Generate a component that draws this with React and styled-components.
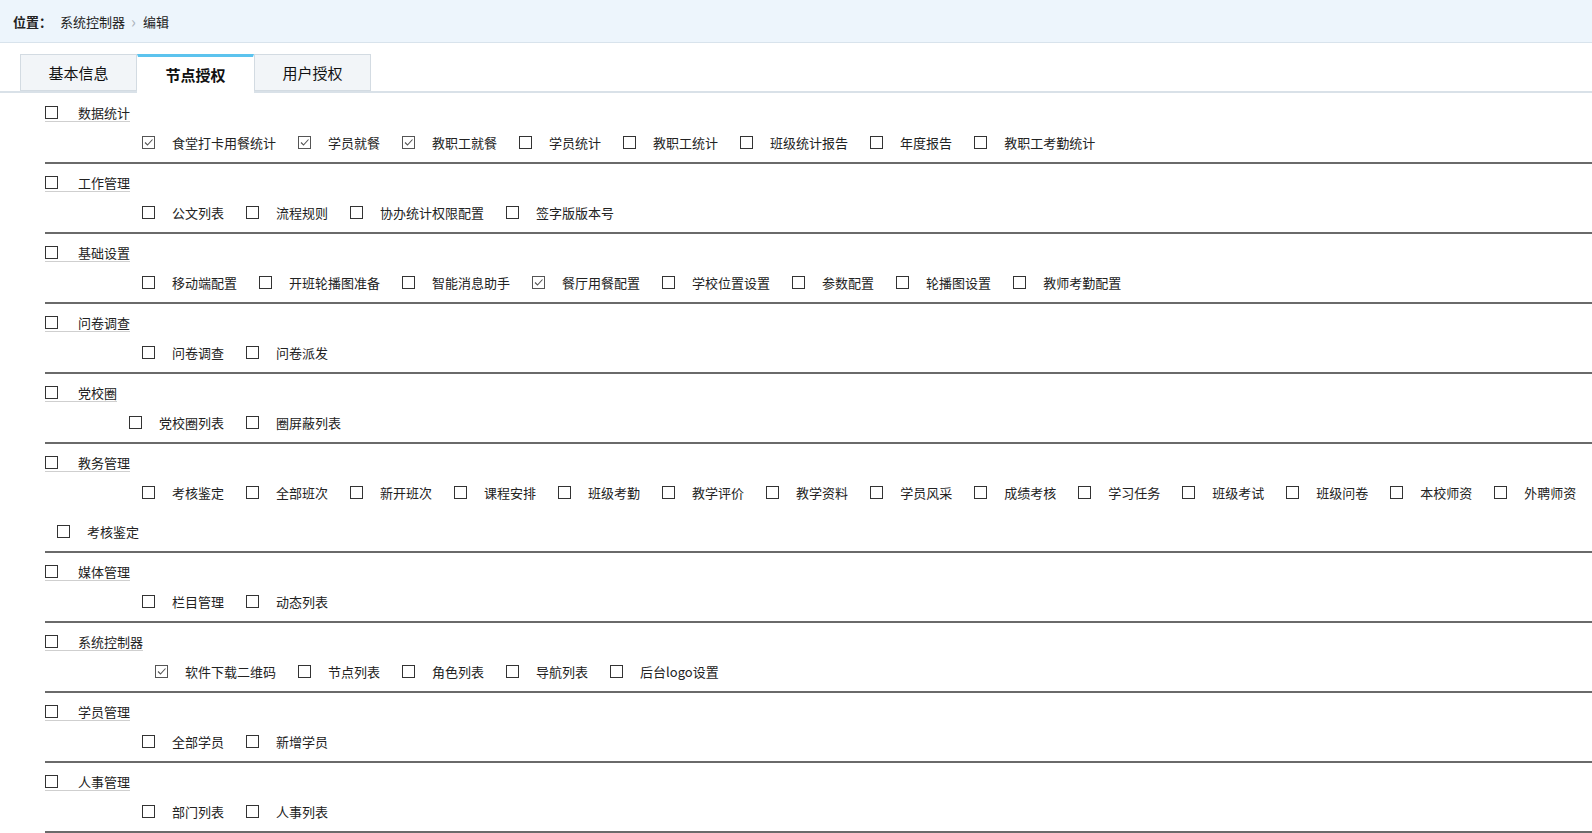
import styled, { createGlobalStyle } from "styled-components";

const groups = [
  {
    name: "数据统计",
    items: [
      ["食堂打卡用餐统计", true],
      ["学员就餐", true],
      ["教职工就餐", true],
      ["学员统计"],
      ["教职工统计"],
      ["班级统计报告"],
      ["年度报告"],
      ["教职工考勤统计"],
    ],
  },
  {
    name: "工作管理",
    items: [["公文列表"], ["流程规则"], ["协办统计权限配置"], ["签字版版本号"]],
  },
  {
    name: "基础设置",
    items: [
      ["移动端配置"],
      ["开班轮播图准备"],
      ["智能消息助手"],
      ["餐厅用餐配置", true],
      ["学校位置设置"],
      ["参数配置"],
      ["轮播图设置"],
      ["教师考勤配置"],
    ],
  },
  { name: "问卷调查", items: [["问卷调查"], ["问卷派发"]] },
  { name: "党校圈", items: [["党校圈列表"], ["圈屏蔽列表"]] },
  {
    name: "教务管理",
    items: [
      ["考核鉴定"],
      ["全部班次"],
      ["新开班次"],
      ["课程安排"],
      ["班级考勤"],
      ["教学评价"],
      ["教学资料"],
      ["学员风采"],
      ["成绩考核"],
      ["学习任务"],
      ["班级考试"],
      ["班级问卷"],
      ["本校师资"],
      ["外聘师资"],
      ["考核鉴定"],
    ],
  },
  { name: "媒体管理", items: [["栏目管理"], ["动态列表"]] },
  {
    name: "系统控制器",
    items: [
      ["软件下载二维码", true],
      ["节点列表"],
      ["角色列表"],
      ["导航列表"],
      ["后台logo设置"],
    ],
  },
  { name: "学员管理", items: [["全部学员"], ["新增学员"]] },
  { name: "人事管理", items: [["部门列表"], ["人事列表"]] },
];

const tabs = ["基本信息", "节点授权", "用户授权"];

const Check = ({ checked }) => (
  <CheckBox $checked={checked}>
    {checked && (
      <svg width="11" height="11" viewBox="0 0 11 11">
        <polyline
          points="2,5.5 4.5,8 9.5,2.5"
          fill="none"
          stroke="#555"
          strokeWidth="1.1"
        />
      </svg>
    )}
  </CheckBox>
);

const App = () => {
  return (
    <>
      <GlobalStyle />
      <Page>
        <Breadcrumb>
          <strong>位置：</strong>
          <Crumb>系统控制器</Crumb>
          <Arrow>›</Arrow>
          <Crumb>编辑</Crumb>
        </Breadcrumb>

        <TabBar>
          {tabs.map((t, i) => (
            <Tab key={t} $active={i === 1}>
              {t}
            </Tab>
          ))}
        </TabBar>

        <GroupList>
          {groups.map((g) => (
            <Group key={g.name}>
              <ParentLabel>
                <Check />
                <ParentText>{g.name}</ParentText>
              </ParentLabel>
              <Children>
                <Spacer aria-hidden>{g.name}</Spacer>
                {g.items.map(([label, checked], i) => (
                  <Item key={label + i}>
                    <Check checked={checked} />
                    <ItemText>{label}</ItemText>
                  </Item>
                ))}
              </Children>
            </Group>
          ))}
        </GroupList>
      </Page>
    </>
  );
};

export default App;

const GlobalStyle = createGlobalStyle`
  html, body {
    margin: 0;
    padding: 0;
    background: #fff;
  }
  body {
    font-family: "Noto Sans CJK SC", "Noto Sans", sans-serif;
    font-size: 13px;
    color: #222;
  }
`;

const Page = styled.div`
  width: 1592px;
  overflow: hidden;
`;

const Breadcrumb = styled.div`
  height: 42px;
  display: flex;
  align-items: center;
  padding-left: 13px;
  background: #edf5fc;
  border-bottom: 1px solid #d8e3ec;
  font-size: 13px;
  color: #222;

  strong {
    font-weight: 700;
    margin-right: 8px;
  }
`;

const Crumb = styled.span`
  color: #222;
`;

const Arrow = styled.span`
  color: #aab3bb;
  font-size: 16px;
  margin: 0 7px 0 6px;
  line-height: 1;
`;

const TabBar = styled.div`
  display: flex;
  margin-top: 11px;
  padding-left: 20px;
  border-bottom: 2px solid #d9e1e8;
  height: 37px;
`;

const Tab = styled.div`
  box-sizing: border-box;
  width: 117px;
  height: ${({ $active }) => ($active ? "39px" : "37px")};
  display: flex;
  align-items: center;
  justify-content: center;
  font-size: 15px;
  color: #111;
  font-weight: ${({ $active }) => ($active ? 700 : 400)};
  background: ${({ $active }) => ($active ? "#fff" : "#f2f5f8")};
  border: 1px solid ${({ $active }) => ($active ? "transparent" : "#d3dbe2")};
  border-top: ${({ $active }) => ($active ? "3px solid #5cc3ee" : "1px solid #d3dbe2")};
  border-bottom: ${({ $active }) => ($active ? "2px solid #fff" : "1px solid #d3dbe2")};
  margin-bottom: ${({ $active }) => ($active ? "-2px" : "0")};
  position: relative;
  z-index: ${({ $active }) => ($active ? 1 : 0)};
`;

const GroupList = styled.div`
  padding-left: 45px;
  padding-top: 1px;
`;

const Group = styled.div`
  padding-top: 10px;
  border-bottom: 2px solid #6a6a6a;
`;

const ParentLabel = styled.div`
  display: inline-flex;
  align-items: center;
  height: 17px;
  border-bottom: 1px solid #cfcfcf;
  vertical-align: top;
`;

const ParentText = styled.span`
  margin-left: 20px;
  font-size: 13px;
  line-height: 17px;
`;

const CheckBox = styled.span`
  flex: none;
  width: 11px;
  height: 11px;
  border: 1px solid ${({ $checked }) => ($checked ? "#555" : "#333")};
  background: #fff;
  display: inline-flex;
  align-items: center;
  justify-content: center;

  svg {
    display: block;
  }
`;

const Children = styled.div`
  display: flex;
  flex-wrap: wrap;
  align-items: center;
`;

const Spacer = styled.span`
  visibility: hidden;
  height: 0;
  padding-left: 33px;
  font-size: 13px;
  overflow: hidden;
`;

const Item = styled.label`
  display: flex;
  align-items: center;
  height: 39px;
  margin-left: 12px;
  margin-right: 10px;
`;

const ItemText = styled.span`
  margin-left: 17px;
  font-size: 13px;
  white-space: nowrap;
`;
